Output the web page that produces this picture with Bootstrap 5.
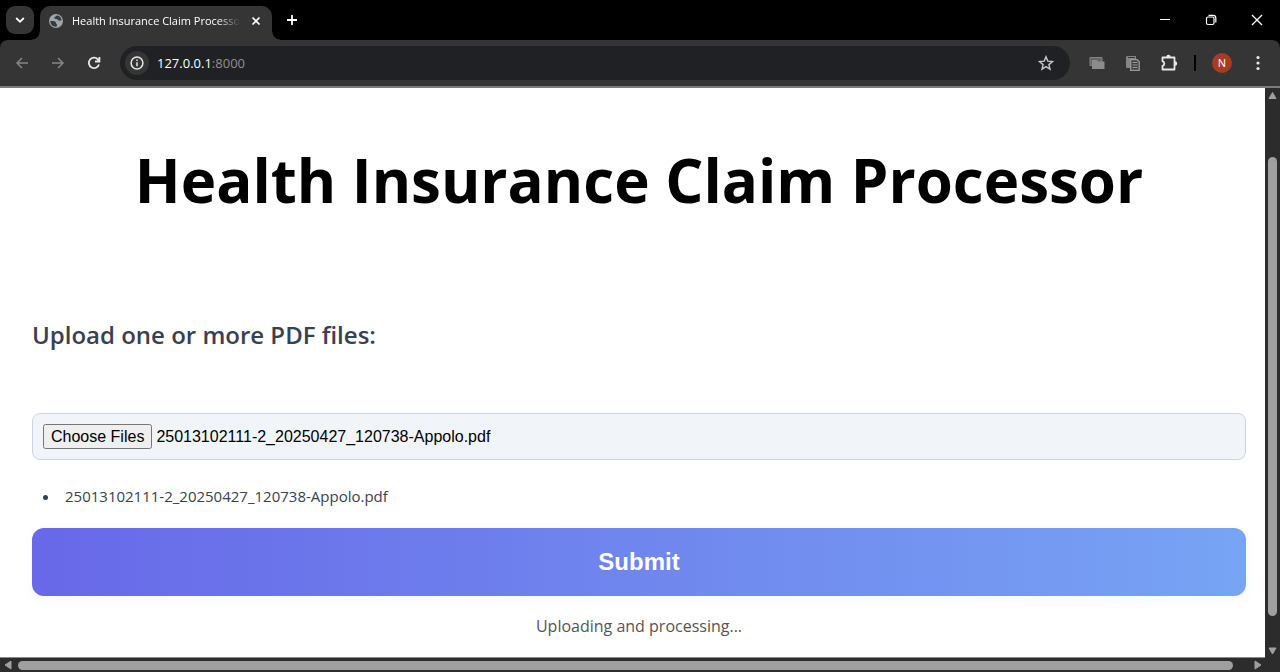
<!DOCTYPE html>
<html lang="en">
<head>
<meta charset="utf-8">
<meta name="viewport" content="width=device-width, initial-scale=1">
<title>Health Insurance Claim Processor</title>
<link href="https://cdn.jsdelivr.net/npm/bootstrap@5.3.0/dist/css/bootstrap.min.css" rel="stylesheet">
<style>
  :root { --chrome: #353535; --track: #2c2c2c; --thumb: #9f9f9f; }
  body { font-family: "Open Sans", "Noto Sans", sans-serif; background: #000; }
  svg { display: block; flex: none; }
  .plain-btn { background: none; border: 0; padding: 0; display: flex; align-items: center; justify-content: center; flex: none; }

  /* tab strip */
  .tab-strip { height: 40px; padding: 6px 0 0 6px; color: #fff; }
  .tab-search { width: 28px; height: 28px; border-radius: 9px; background: var(--chrome); color: #fff; }
  .browser-tab { width: 232px; height: 34px; margin-left: 6px; padding: 0 8px 4px; border-radius: 10px 10px 0 0; background: var(--chrome); }
  .browser-tab::before, .browser-tab::after { content: ""; position: absolute; bottom: 0; width: 8px; height: 8px; }
  .browser-tab::before { left: -8px; background: radial-gradient(circle at 0 0, transparent 7px, var(--chrome) 8px); }
  .browser-tab::after { right: -8px; background: radial-gradient(circle at 100% 0, transparent 7px, var(--chrome) 8px); }
  .tab-title { font: 11px/16px "Open Sans", sans-serif; width: 168px; height: 16px; -webkit-mask-image: linear-gradient(90deg, #000 146px, transparent 168px); mask-image: linear-gradient(90deg, #000 146px, transparent 168px); }
  .tab-x { width: 16px; height: 28px; color: #fff; }
  .tab-add { width: 40px; height: 28px; color: #fff; }
  .win-btn { width: 46px; height: 28px; color: #fff; }

  /* toolbar */
  .toolbar { height: 46px; background: var(--chrome); border-radius: 8px 8px 0 0; padding: 0 4px; }
  .tool { width: 36px; height: 34px; color: #e8e8e8; }
  .tool:disabled, .dim { color: #858585; }
  .omnibox { height: 34px; border-radius: 17px; background: #202124; margin: 0 9px 0 8px; padding: 0 6px 0 5px; }
  .info { width: 24px; height: 24px; border-radius: 50%; background: var(--chrome); color: #e8e8e8; }
  .address { font: 13px/20px "Open Sans", sans-serif; color: #fff; outline: 0; margin-left: 8px; }
  .address span { color: #909090; }
  .divider { width: 2px; height: 16px; background: #000; margin: 0 8px 0 7px; }
  .avatar { width: 20px; height: 20px; border-radius: 50%; background: #a83c20; color: #fff; font-size: 11px; margin: 0 8px; }

  /* page */
  .viewport { border-top: 2px solid #7c7c7c; }
  .page { background: #fff; border-bottom: 1px solid #8a8a8a; padding: 48px 19px 0 32px; }
  h1 { font-size: 60px; line-height: 88px; font-weight: 700; color: #000; margin-bottom: 88px; }
  .upload-label { font-size: 24px; line-height: 46px; font-weight: 600; color: #374151; margin-bottom: 55px; }
  .file-box { height: 47px; padding: 10px; background: #f1f5f9; border: 1px solid #cbd5e1; border-radius: 8px; font: 16px/23px "Liberation Sans", sans-serif; color: #000; }
  .file-box::file-selector-button { font: 16px/19px "Liberation Sans", sans-serif; }
  .file-names { padding-left: 28px; margin: 24px 0 20px; font-size: 15px; line-height: 24px; color: #374151; }
  .file-names li { padding-left: 5px; }
  .submit-btn { height: 68px; border: 0; border-radius: 12px; background: linear-gradient(90deg, #6868e8, #77a4f4); color: #fff; font: 700 24px/28px "Liberation Sans", sans-serif; box-shadow: 0 4px 12px rgba(99, 102, 241, .05); }
  .status { margin: 16px 0 0; font-size: 16px; line-height: 28px; color: #555; }

  /* scrollbars */
  .v-scroll { width: 15px; background: var(--track); padding: 2px 3px; }
  .v-thumb { width: 9px; flex: 458 0 0; border-radius: 5px; background: var(--thumb); }
  .h-scroll { height: 14px; background: var(--track); padding: 0 18px 0 4px; }
  .h-thumb { height: 9px; border-radius: 5px; background: var(--thumb); margin: 0 21px 0 6px; }
  .arrow { fill: var(--thumb); stroke: var(--thumb); stroke-linejoin: round; }
</style>
</head>
<body class="vh-100 d-flex flex-column overflow-hidden">
  <header>
    <div class="tab-strip d-flex">
      <button class="plain-btn tab-search" aria-label="Search tabs">
        <svg width="10" height="10" viewBox="0 0 10 10" fill="none" stroke="currentColor" stroke-width="1.8"><path d="M1.2 3 5 6.8 8.8 3"/></svg>
      </button>
      <div class="browser-tab d-flex align-items-center position-relative">
        <svg width="16" height="16" viewBox="0 0 16 16"><circle cx="8" cy="8" r="7" fill="#a0a5aa"/><path fill="#353b42" d="M2.300 8c2.500-.3 5 .2 5.500 1.300.5 1 .1 1.500 1.100 1.900v2.300C5.500 14.300 2.300 12 2.300 8zM9.500 2.500c-1.800.2-1.500 1.300-3 1.600-.9.500.3 2.100 2 1.900 1.200-.1 1.300 1.200 2.400 1.500 1.100.3 1.800.1 2.700-.5C13.200 4.700 11.700 3 9.500 2.500z"/></svg>
        <div class="tab-title text-nowrap overflow-hidden ms-2">Health Insurance Claim Processor</div>
        <button class="plain-btn tab-x ms-auto" aria-label="Close tab">
          <svg width="10" height="10" viewBox="0 0 10 10" stroke="currentColor" stroke-width="1.7"><path d="m1.500 1.500 7 7m0-7-7 7"/></svg>
        </button>
      </div>
      <button class="plain-btn tab-add" aria-label="New tab">
        <svg width="12" height="12" viewBox="0 0 12 12" stroke="currentColor" stroke-width="1.800"><path d="M6 1v10M1 6h10"/></svg>
      </button>
      <div class="d-flex ms-auto">
        <button class="plain-btn win-btn" aria-label="Minimize"><svg width="12" height="12" viewBox="0 0 12 12" stroke="currentColor"><path d="M1 5.500h10"/></svg></button>
        <button class="plain-btn win-btn" aria-label="Restore"><svg width="12" height="12" viewBox="0 0 12 12" fill="none" stroke="currentColor" stroke-width="1.200"><rect x="1.500" y="3" width="7.500" height="7.500" rx="1.500"/><path d="M3.500 1.300h4.700a2.600 2.600 0 0 1 2.600 2.600v4.600"/></svg></button>
        <button class="plain-btn win-btn" aria-label="Close"><svg width="12" height="12" viewBox="0 0 12 12" stroke="currentColor" stroke-width="1.300"><path d="m1 1 10 10m0-10L1 11"/></svg></button>
      </div>
    </div>
    <div class="toolbar d-flex align-items-center">
      <button class="plain-btn tool" disabled aria-label="Back"><svg width="14" height="14" viewBox="0 0 14 14" fill="none" stroke="currentColor" stroke-width="1.500"><path d="M13 7H2m5-5L2 7l5 5"/></svg></button>
      <button class="plain-btn tool" disabled aria-label="Forward"><svg width="14" height="14" viewBox="0 0 14 14" fill="none" stroke="currentColor" stroke-width="1.500"><path d="M1 7h11M7 2l5 5-5 5"/></svg></button>
      <button class="plain-btn tool" aria-label="Reload"><svg width="14" height="14" viewBox="0 0 14 14" fill="none" stroke="currentColor" stroke-width="1.800"><path d="M12 8.500A5.200 5.200 0 1 1 10.800 3.300L12.300 5M12.400 1v4.500H8"/></svg></button>
      <div class="omnibox d-flex align-items-center flex-grow-1">
        <button class="plain-btn info" aria-label="Site information"><svg width="14" height="14" viewBox="0 0 14 14" fill="none" stroke="currentColor" stroke-width="1.500"><circle cx="7" cy="7" r="5.900"/><path d="M7 6.200v4M7 3.600v1.500"/></svg></button>
        <div class="address flex-grow-1" role="textbox" aria-label="Address" contenteditable="true" spellcheck="false">127.0.0.1<span>:8000</span></div>
        <button class="plain-btn tool" aria-label="Bookmark"><svg width="16" height="16" viewBox="0 0 16 16" fill="none" stroke="#c7c7c7" stroke-width="1.400"><path d="m8 1.700 1.800 4.400 4.700.4-3.600 3.100 1.100 4.600L8 11.700l-4 2.500 1.100-4.600-3.600-3.100 4.700-.4z"/></svg></button>
      </div>
      <button class="plain-btn tool dim" aria-label="Windows"><svg width="16" height="14" viewBox="0 0 16 14"><path fill="#666" stroke="#858585" d="M1 1.500h12v8H1z"/><path fill="#8c8c8c" d="M3 4h5l1 1.500h6.500V13H3z"/></svg></button>
      <button class="plain-btn tool dim" aria-label="Clipboard"><svg width="16" height="16" viewBox="0 0 16 16"><path fill="#858585" d="M2 1h9v3H6v9H2a1 1 0 0 1-1-1V2z"/><path stroke="#353535" d="M3 2.500h7"/><path fill="#404040" stroke="#9a9a9a" stroke-width="1.300" d="M5.700 4.700h6.500l2 2v8.600H5.700z"/><path stroke="#9a9a9a" d="M7.500 7.500h5m-5 2.500h5m-5 2.500h5"/></svg></button>
      <button class="plain-btn tool" aria-label="Extensions"><svg width="18" height="18" viewBox="0 0 18 18"><path fill="none" stroke="currentColor" stroke-width="1.800" stroke-linejoin="round" d="M2.500 3.500h12v12h-12v-3.700a2.300 2.300 0 0 0 0-4.500z"/><path fill="currentColor" d="M6.300 3a2.200 2.200 0 0 1 4.400 0zM15 7.300a2.200 2.200 0 0 1 0 4.400z"/></svg></button>
      <div class="divider"></div>
      <button class="plain-btn avatar" aria-label="Profile">N</button>
      <button class="plain-btn tool" aria-label="Menu"><svg width="4" height="16" viewBox="0 0 4 16" fill="currentColor"><circle cx="2" cy="2.500" r="1.600"/><circle cx="2" cy="8" r="1.600"/><circle cx="2" cy="13.500" r="1.600"/></svg></button>
    </div>
  </header>

  <div class="viewport d-flex flex-grow-1 overflow-hidden">
    <main class="page flex-grow-1 overflow-hidden">
      <h1 class="text-center text-nowrap">Health Insurance Claim Processor</h1>
      <form onsubmit="return false">
        <label class="upload-label d-block" for="files">Upload one or more PDF files:</label>
        <input class="file-box d-block w-100" type="file" id="files" accept="application/pdf" multiple>
        <ul class="file-names"><li>25013102111-2_20250427_120738-Appolo.pdf</li></ul>
        <button class="submit-btn d-block w-100" type="submit">Submit</button>
      </form>
      <p class="status text-center">Uploading and processing...</p>
    </main>
    <div class="v-scroll d-flex flex-column align-items-center">
      <svg class="arrow" width="9" height="10" viewBox="0 0 9 10"><path d="M4.500 2.500 8 8.500H1z"/></svg>
      <div style="flex: 57 0 0"></div>
      <div class="v-thumb"></div>
      <div style="flex: 30 0 0"></div>
      <svg class="arrow" width="9" height="10" viewBox="0 0 9 10"><path d="M4.500 8 8 2H1z"/></svg>
    </div>
  </div>
  <div class="h-scroll d-flex align-items-center">
    <svg class="arrow" width="8" height="10" viewBox="0 0 8 10"><path d="M1 5 7 1v8z"/></svg>
    <div class="h-thumb flex-grow-1"></div>
    <svg class="arrow" width="8" height="10" viewBox="0 0 8 10"><path d="M7 5 1 1v8z"/></svg>
  </div>

<script src="https://cdn.jsdelivr.net/npm/bootstrap@5.3.0/dist/js/bootstrap.bundle.min.js"></script>
<script>
  const queue = new DataTransfer();
  queue.items.add(new File(["%PDF"], "25013102111-2_20250427_120738-Appolo.pdf", { type: "application/pdf" }));
  document.getElementById("files").files = queue.files;
</script>
</body>
</html>
